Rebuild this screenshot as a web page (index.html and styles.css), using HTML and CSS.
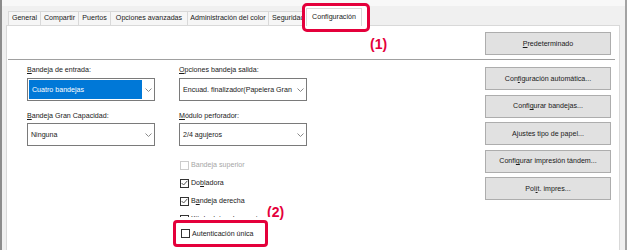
FILE: index.html
```html
<!DOCTYPE html>
<html lang="es">
<head>
<meta charset="utf-8">
<title>Configuración</title>
<link rel="stylesheet" href="styles.css">
</head>
<body>
<div class="window">
  <div class="tabs">
    <div class="tab tab-general">General</div>
    <div class="tab tab-compartir">Compartir</div>
    <div class="tab tab-puertos">Puertos</div>
    <div class="tab tab-opciones">Opciones avanzadas</div>
    <div class="tab tab-color">Administración del color</div>
    <div class="tab tab-clip">Seguridad</div>
    <div class="tab-callout"><div class="tab-active">Configuración</div></div>
  </div>
  <div class="panel">
    <div class="top-row"><button class="btn"><u>P</u>redeterminado</button></div>
    <div class="rule"></div>
    <div class="main">
      <div class="col col-left">
        <div class="label"><u>B</u>andeja de entrada:</div>
        <div class="select">
          <span class="value value-sel">Cuatro bandejas</span>
          <span class="chev"><svg width="7" height="4" viewBox="0 0 7 4"><polyline points="0.5,0.5 3.5,3.5 6.5,0.5" fill="none" stroke="#8a8a8a" stroke-width="1"/></svg></span>
        </div>
        <div class="label label-2"><u>B</u>andeja Gran Capacidad:</div>
        <div class="select">
          <span class="value">Ninguna</span>
          <span class="chev"><svg width="7" height="4" viewBox="0 0 7 4"><polyline points="0.5,0.5 3.5,3.5 6.5,0.5" fill="none" stroke="#8a8a8a" stroke-width="1"/></svg></span>
        </div>
      </div>
      <div class="col col-mid">
        <div class="label"><u>O</u>pciones bandeja salida:</div>
        <div class="select">
          <span class="value">Encuad. finalizador(Papelera Gran</span>
          <span class="chev"><svg width="7" height="4" viewBox="0 0 7 4"><polyline points="0.5,0.5 3.5,3.5 6.5,0.5" fill="none" stroke="#8a8a8a" stroke-width="1"/></svg></span>
        </div>
        <div class="label label-2"><u>M</u>ódulo perforador:</div>
        <div class="select">
          <span class="value">2/4 agujeros</span>
          <span class="chev"><svg width="7" height="4" viewBox="0 0 7 4"><polyline points="0.5,0.5 3.5,3.5 6.5,0.5" fill="none" stroke="#8a8a8a" stroke-width="1"/></svg></span>
        </div>
        <div class="checks">
          <div class="check check-disabled"><span class="box"></span>Bandeja superior</div>
          <div class="check"><span class="box"><svg width="7" height="6" viewBox="0 0 7 6"><polyline points="0.6,3 2.6,5 6.4,0.8" fill="none" stroke="#555" stroke-width="1"/></svg></span>Do<u>b</u>ladora</div>
          <div class="check"><span class="box"><svg width="7" height="6" viewBox="0 0 7 6"><polyline points="0.6,3 2.6,5 6.4,0.8" fill="none" stroke="#555" stroke-width="1"/></svg></span>B<u>a</u>ndeja derecha</div>
          <div class="check"><span class="box"></span>Kit de datos de cuenta</div>
        </div>
      </div>
      <div class="col col-right">
        <button class="btn">Con<u>f</u>iguración automática...</button>
        <button class="btn">Confi<u>g</u>urar bandejas...</button>
        <button class="btn">A<u>j</u>ustes tipo de papel...</button>
        <button class="btn">Confi<u>g</u>urar impresión tándem...</button>
        <button class="btn">Pol<u>í</u>t. impres...</button>
      </div>
    </div>
  </div>
</div>
<div class="annot annot-1">(1)</div>
<div class="annot annot-2">(2)</div>
<div class="callout-2">
  <div class="callout-box">
    <div class="check"><span class="box"></span>Autenticación única</div>
  </div>
</div>
</body>
</html>
```
FILE: styles.css
```css
* { box-sizing: border-box; margin: 0; padding: 0; }

body {
  position: relative;
  width: 627px;
  height: 250px;
  overflow: hidden;
  background: #f0f0f0;
  font-family: "Liberation Sans", Arial, sans-serif;
  font-size: 7.1px;
  color: #1a1a1a;
}

.window {
  height: 250px;
  border-left: 2px solid #8c8c8c;
  border-right: 2px solid #a3a3a3;
  padding: 11px 5px 0 4px;
  background: linear-gradient(#f8f8f8 0, #f8f8f8 6px, #f0f0f0 6px);
}

.tabs {
  display: flex;
  height: 14px;
  margin-left: 2px;
}

.tab {
  border: 1px solid #d9d9d9;
  border-right: none;
  border-bottom: none;
  background: #f6f6f6;
  line-height: 13px;
  white-space: nowrap;
  text-align: center;
  overflow: hidden;
}

.tab-general { width: 32px; }
.tab-compartir { width: 38px; }
.tab-puertos { width: 32px; }
.tab-opciones { width: 77px; }
.tab-color { width: 81px; }

.tab-clip {
  width: 38px;
  text-align: left;
  padding-left: 3px;
}

.tab-callout {
  position: relative;
  z-index: 2;
  margin-top: -3px;
  height: 18px;
}

.tab-callout::before {
  content: "";
  position: absolute;
  left: -4px;
  right: -8px;
  top: -5px;
  bottom: -6px;
  border: 3px solid #e4003b;
  border-radius: 5px;
  background: #fff;
  z-index: -1;
}

.tab-active {
  width: 56px;
  height: 18px;
  background: #fff;
  border: 1px solid #d9d9d9;
  border-bottom: none;
  text-align: center;
  line-height: 16px;
  white-space: nowrap;
}

.panel {
  height: 225px;
  background: #fff;
  border: 1px solid #d9d9d9;
  border-bottom: none;
}

.top-row {
  display: flex;
  justify-content: flex-end;
  padding: 6px 8px 0 0;
}

.btn {
  display: block;
  width: 126px;
  height: 23px;
  background: #e1e1e1;
  border: 1px solid #adadad;
  font: inherit;
  color: #1a1a1a;
  text-align: center;
  white-space: nowrap;
}

.rule {
  height: 1px;
  background: #a0a0a0;
  margin: 4px 4px 0 1px;
}

.main {
  display: flex;
  padding: 0 8px 0 20px;
}

.col {
  display: flex;
  flex-direction: column;
  padding-top: 6px;
}

.col-left { width: 128px; }

.col-mid { width: 128px; margin-left: 24px; }

.col-right {
  width: 126px;
  margin-left: auto;
  padding-top: 7px;
  gap: 4.5px;
}

.label {
  line-height: 9px;
  margin-bottom: 3px;
  white-space: nowrap;
}

.label-2 {
  margin-top: 11px;
  margin-bottom: 2px;
}

.select {
  display: flex;
  align-items: center;
  height: 23px;
  border: 1px solid #7a7a7a;
  background: #fff;
}

.value {
  flex: 1;
  min-width: 0;
  overflow: hidden;
  white-space: nowrap;
  padding-left: 3px;
}

.value-sel {
  align-self: stretch;
  display: flex;
  align-items: center;
  margin: 1px 0 1px 1px;
  padding-left: 3px;
  background: #0078d7;
  color: #fff;
}

.chev {
  display: flex;
  justify-content: center;
  width: 12px;
  flex: none;
}

.chev svg { display: block; }

.checks {
  margin-top: 10px;
}

.check {
  display: flex;
  align-items: center;
  height: 18px;
  padding-left: 1px;
  white-space: nowrap;
}

.box {
  display: flex;
  align-items: center;
  justify-content: center;
  width: 9px;
  height: 9px;
  margin-right: 2px;
  border: 1px solid #333;
  background: #fff;
  flex: none;
}

.box svg { display: block; }

.check-disabled { color: #a6a6a6; }

.check-disabled .box { border-color: #cccccc; }

.annot {
  position: absolute;
  color: #e4003b;
  font-weight: bold;
  font-size: 14px;
  line-height: 15px;
}

.annot-1 { left: 370px; top: 37px; }

.annot-2 { left: 267px; top: 205px; }

.callout-2 {
  position: absolute;
  left: 170px;
  top: 217px;
  width: 104px;
  height: 33px;
  padding: 3px 0 0 3px;
  background: #fff;
}

.callout-box {
  display: flex;
  align-items: center;
  width: 95px;
  height: 27px;
  padding-left: 4px;
  border: 3px solid #e4003b;
  border-radius: 4px;
}
```
